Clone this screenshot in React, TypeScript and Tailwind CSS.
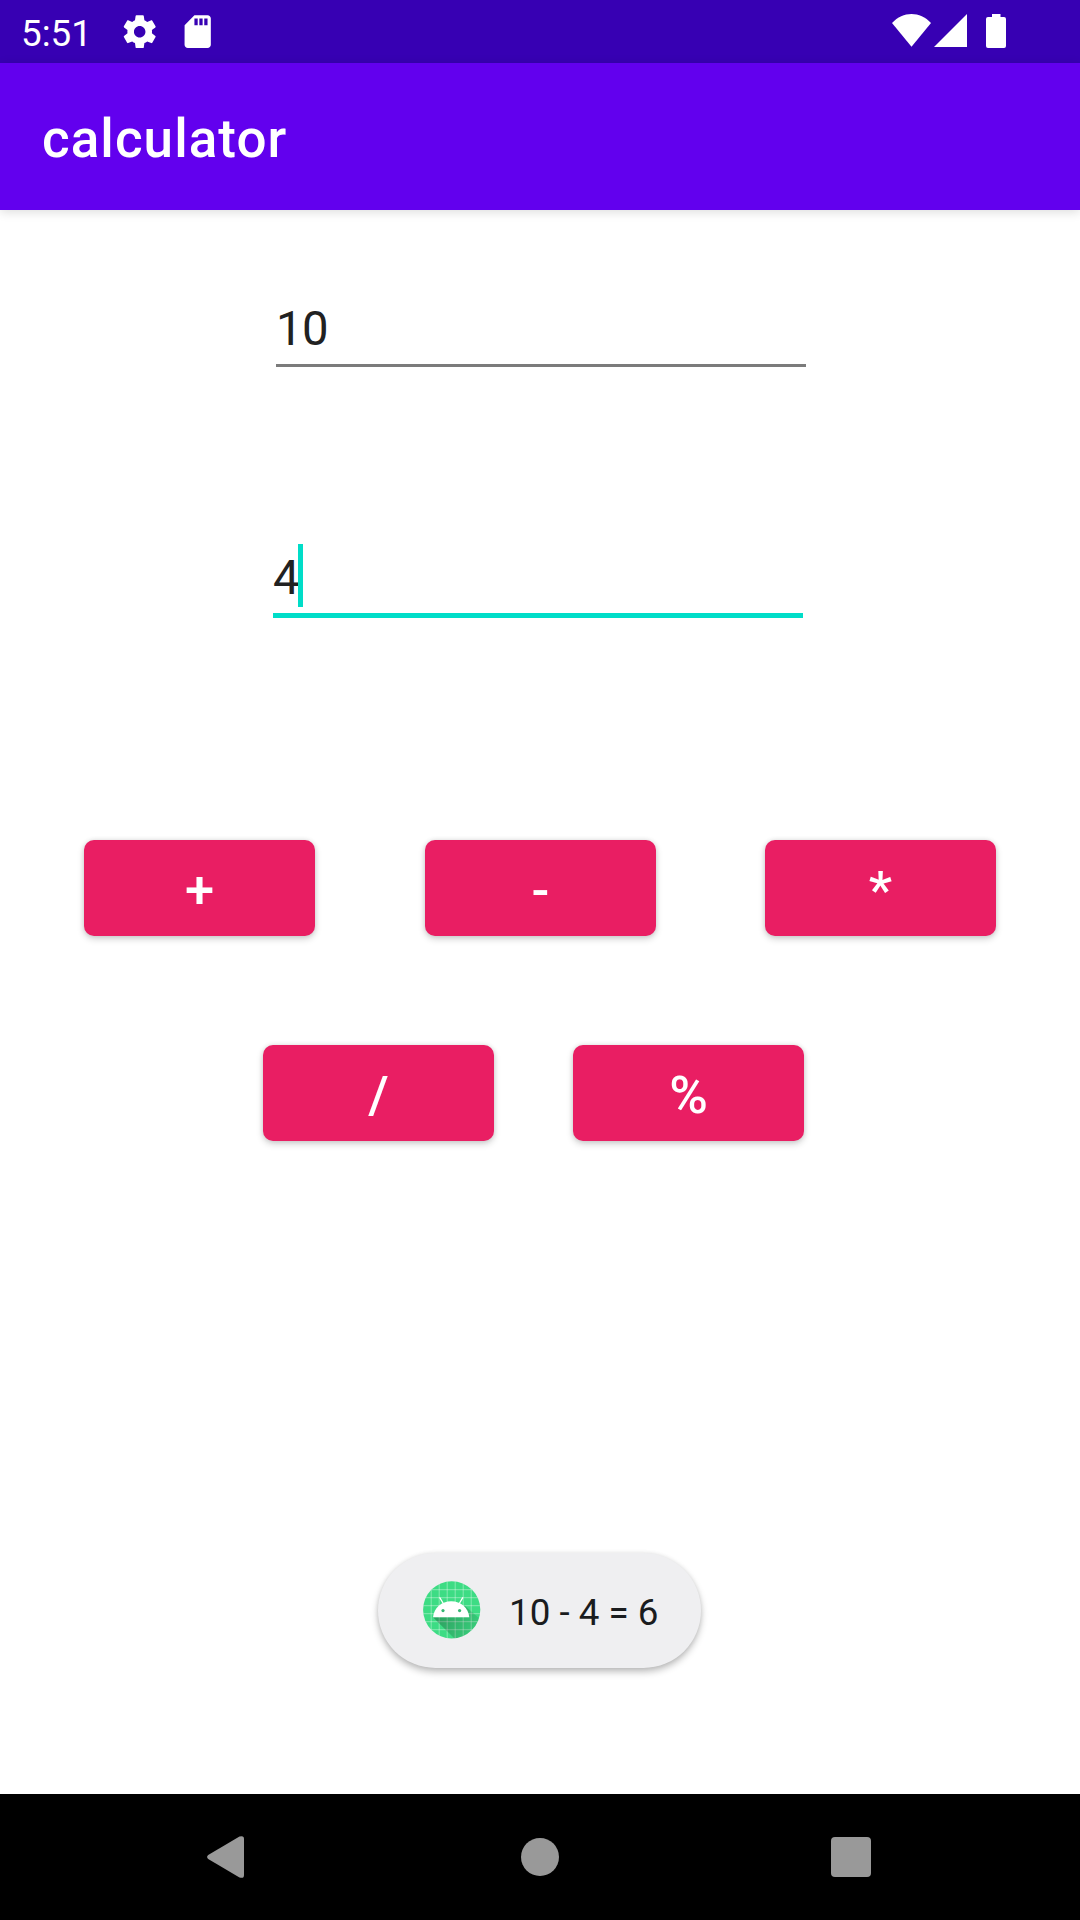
const gridLines = [8.2, 16.2, 24.2, 32.2, 40.2, 48.2];

function OperatorButton({ label }: { label: string }) {
  return (
    <button
      type="button"
      className="flex h-24 w-[231px] items-center justify-center rounded-[10px] bg-[#E91E63] pt-1 text-[52.5px] leading-[62px] font-medium text-white shadow-[0_3px_7px_rgba(0,0,0,0.18),0_0_5px_rgba(0,0,0,0.1)]"
    >
      {label}
    </button>
  );
}

function LauncherIcon() {
  return (
    <svg className="-mt-px size-[58px] shrink-0" viewBox="0 0 58 58">
      <defs>
        <clipPath id="disc">
          <circle cx="28.7" cy="28.8" r="28.6" />
        </clipPath>
        <linearGradient id="cast" x1="15" y1="36" x2="50" y2="58" gradientUnits="userSpaceOnUse">
          <stop offset="0" stopColor="#000" stopOpacity="0.27" />
          <stop offset="1" stopColor="#000" stopOpacity="0.06" />
        </linearGradient>
      </defs>
      <g clipPath="url(#disc)">
        <rect width="58" height="58" fill="#3DDC84" />
        <g stroke="#fff" strokeOpacity="0.42" strokeWidth="0.9">
          {gridLines.map((p) => (
            <path key={p} d={`M${p} 0V58M0 ${p + 0.5}H58`} />
          ))}
        </g>
        <path d="M10 36.3L32 58H58V39L41 24L46 36.3Z" fill="url(#cast)" />
        <path d="M16.9 16.8L20.3 22.5M39.6 16.8L36.3 22.5" stroke="#fff" strokeWidth="1.3" strokeLinecap="round" />
        <path d="M10 36.3C11 26.5 18.500 20.200 28.200 20.200S45.300 26.500 46.300 36.300Z" fill="#fff" />
        <circle cx="20" cy="29.600" r="1.600" fill="#35b873" />
        <circle cx="36.600" cy="29.600" r="1.600" fill="#35b873" />
      </g>
    </svg>
  );
}

function StatusBar() {
  return (
    <div className="flex h-[63px] items-start justify-between bg-[#3700B3] text-white">
      <div className="flex items-start pl-[21px]">
        <span className="mt-[12px] w-[99px] text-[36.75px] leading-[43px]">5:51</span>
        <svg className="mt-[12px] size-[39.4px]" viewBox="0 0 24 24" fill="currentColor">
          <path d="M19.430 12.980c.04-.32.07-.64.07-.98s-.03-.66-.07-.98l2.110-1.650c.19-.15.24-.42.12-.64l-2-3.460c-.12-.22-.39-.3-.61-.22l-2.490 1c-.52-.4-1.080-.73-1.690-.98l-.38-2.650C14.460 2.180 14.250 2 14 2h-4c-.25 0-.46.18-.49.42l-.38 2.650c-.61.25-1.170.59-1.690.98l-2.490-1c-.23-.09-.49 0-.61.22l-2 3.460c-.13.22-.07.49.12.64l2.110 1.650c-.04.32-.07.65-.07.98s.03.66.07.98l-2.110 1.650c-.19.15-.24.42-.12.64l2 3.460c.12.22.39.3.61.22l2.490-1c.52.4 1.080.73 1.690.98l.38 2.650c.03.24.24.42.49.42h4c.25 0 .46-.18.49-.42l.38-2.650c.61-.25 1.170-.59 1.690-.98l2.490 1c.23.09.49 0 .61-.22l2-3.460c.12-.22.07-.49-.12-.64l-2.110-1.650zM12 15.500c-1.930 0-3.500-1.570-3.500-3.500s1.570-3.500 3.500-3.500 3.500 1.570 3.500 3.500-1.570 3.500-3.500 3.500z" />
        </svg>
        <svg className="mt-[12px] ml-[19px] size-[39.4px]" viewBox="0 0 24 24" fill="currentColor">
          <path d="M18 2h-8L4.020 8 4 20c0 1.100.9 2 2 2h12c1.100 0 2-.9 2-2V4c0-1.100-.9-2-2-2zm-6 6h-2V4h2v4zm3 0h-2V4h2v4zm3 0h-2V4h2v4z" />
        </svg>
      </div>
      <div className="flex pt-[14px] pr-[74px]">
        <svg className="h-[34px] w-[40px]" viewBox="0 0 40 34" fill="currentColor">
          <path d="M0 9C11 -3 28 -3 39 9L19.500 32.700Z" />
        </svg>
        <svg className="ml-[2px] h-[34px] w-[33px]" viewBox="0 0 33 34" fill="currentColor">
          <path d="M0 33L33 0V33Z" />
        </svg>
        <svg className="ml-[19px] h-[34px] w-[20px]" viewBox="0 0 20 34" fill="currentColor">
          <path d="M6 0H14.500V3H18Q20 3 20 5V32Q20 34 18 34H2Q0 34 0 32V5Q0 3 2 3H6Z" />
        </svg>
      </div>
    </div>
  );
}

export default function App() {
  return (
    <div className="flex h-[1920px] w-[1080px] flex-col overflow-hidden bg-white font-['Roboto',sans-serif]">
      <StatusBar />
      <header className="flex h-[147px] items-center bg-[#6200EE] pl-[42px] shadow-[0_2px_10px_rgba(0,0,0,0.14)]">
        <h1 className="pt-[5px] text-[53px] leading-[62px] font-medium tracking-[1.05px] text-white">calculator</h1>
      </header>

      <main className="flex flex-1 flex-col">
        <div className="mt-[91px] ml-[276px] flex h-[66px] w-[530px] flex-col border-b-3 border-[#7b7b7b]">
          <span className="mt-px text-[47.25px] leading-[55px] tracking-[-0.5px] text-[#212121]">10</span>
        </div>
        <div className="mt-[177px] ml-[273px] flex h-[74px] w-[530px] items-start border-b-5 border-[#00DDC8]">
          <span className="mt-[7px] w-[25px] text-[47.25px] leading-[55px] text-[#212121]">4</span>
          <span className="z-10 h-[63px] w-[5px] bg-[#00DDC8]" />
        </div>

        <div className="mt-[222px] flex pl-[84px]">
          <OperatorButton label="+" />
          <div className="ml-[110px] flex gap-[109px]">
            <OperatorButton label="-" />
            <OperatorButton label="*" />
          </div>
        </div>
        <div className="mt-[109px] flex gap-[79px] pl-[263px]">
          <OperatorButton label="/" />
          <OperatorButton label="%" />
        </div>

        <div className="mt-[412px] ml-[378px] flex h-[115px] w-[323px] items-center rounded-full bg-[#EFEFF1] pl-[45px] shadow-[0_4px_7px_rgba(0,0,0,0.25),0_0_4px_rgba(0,0,0,0.08)]">
          <LauncherIcon />
          <span className="mt-[4px] ml-[28px] text-[36.75px] leading-[43px] whitespace-nowrap text-[#1A1C1E]">
            10 - 4 = 6
          </span>
        </div>
      </main>

      <nav className="flex h-[126px] items-center bg-black pl-[207px]">
        <svg className="h-[42px] w-[37px]" viewBox="0 0 37 42" fill="#999">
          <path d="M1.200 19L32.500 0.600Q37 -1 37 3V39Q37 43 32.500 41.400L1.200 23Q-1 21 1.200 19Z" />
        </svg>
        <span className="ml-[277px] size-[38px] rounded-full bg-[#999]" />
        <span className="ml-[272px] size-[40px] rounded-[4px] bg-[#999]" />
      </nav>
    </div>
  );
}
